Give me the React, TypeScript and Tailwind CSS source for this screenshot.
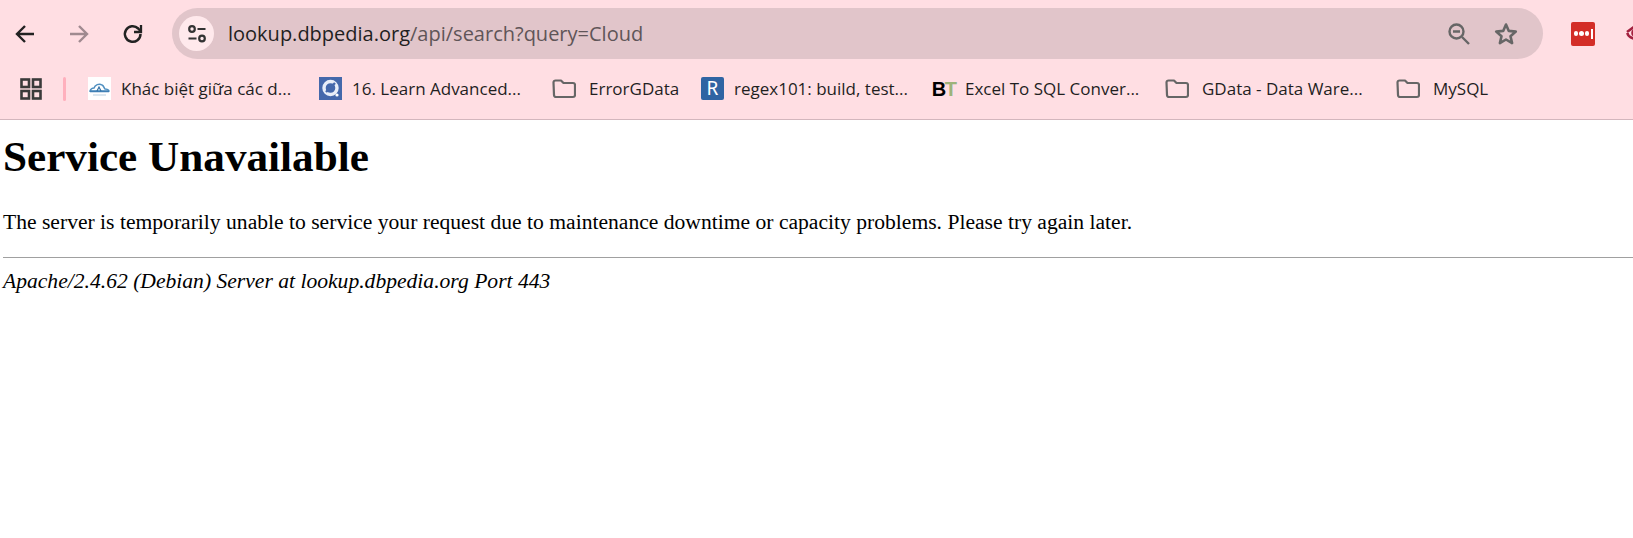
const bookmarks = [
  { id: 'a', label: 'Khác biệt giữa các d...', icon: 'cloud', width: 'w-[231px]' },
  { id: 'b', label: '16. Learn Advanced...', icon: 'ring', width: 'w-[233px]' },
  { id: 'c', label: 'ErrorGData', icon: 'folder', width: 'w-[149px]' },
  { id: 'd', label: 'regex101: build, test...', icon: 'regex', width: 'w-[231px]' },
  { id: 'e', label: 'Excel To SQL Conver...', icon: 'bt', width: 'w-[233px]' },
  { id: 'f', label: 'GData - Data Ware...', icon: 'folder', width: 'w-[231px]' },
  { id: 'g', label: 'MySQL', icon: 'folder', width: 'w-[100px]' },
];

function FolderIcon() {
  return (
    <svg className="mr-[3px] h-[23px] w-[24px] shrink-0" viewBox="0 0 24 23" fill="none" stroke="#666" strokeWidth="2.2">
      <path d="M1.5 5.5a2 2 0 0 1 2-2h5.5l2.5 2.5h9.5a2 2 0 0 1 2 2v10a2 2 0 0 1-2 2h-17a2 2 0 0 1-2-2z" strokeLinejoin="round" />
    </svg>
  );
}

function Favicon({ icon }: { icon: string }) {
  if (icon === 'folder') return <FolderIcon />;
  if (icon === 'regex') {
    return (
      <div className="flex h-[23px] w-[23px] shrink-0 items-center justify-center rounded-[2px] bg-[#2f64a3] font-['Noto_Sans',sans-serif] text-[19px] text-white">
        R
      </div>
    );
  }
  if (icon === 'bt') {
    return (
      <div className="flex h-[23px] w-[23px] shrink-0 items-center justify-center font-['Liberation_Sans',sans-serif] text-[20px] font-bold tracking-[-1.5px] text-black">
        B<span className="text-[#9db37a]">T</span>
      </div>
    );
  }
  if (icon === 'ring') {
    return (
      <svg className="h-[23px] w-[23px] shrink-0" viewBox="0 0 23 23">
        <rect width="23" height="23" fill="#4468ab" />
        <circle cx="11.5" cy="11" r="6.5" fill="none" stroke="#e8eef8" strokeWidth="3.4" />
        <path d="M7 15L16 6" stroke="#4468ab" strokeWidth="2.4" />
        <circle cx="18" cy="18" r="1.6" fill="#fff" />
      </svg>
    );
  }
  return (
    <svg className="h-[23px] w-[23px] shrink-0" viewBox="0 0 23 23">
      <rect width="23" height="23" fill="#fff" />
      <path d="M2 14c1-3 3-3 4-3 1-3 5-5 8-3 2 1 2 3 3 4 2 0 4 1 4 2z" fill="none" stroke="#4f8fc0" strokeWidth="1.5" />
      <path d="M2 14.5h19" stroke="#3f7fb5" strokeWidth="1.5" />
      <path d="M9 14l2-4 2 4" fill="none" stroke="#2f6fa5" strokeWidth="1.2" />
      <path d="M5 18h13" stroke="#b8cfe0" strokeWidth="1" />
    </svg>
  );
}

export default function App() {
  return (
    <div className="h-[538px] w-full overflow-hidden bg-white">
      {/* browser chrome */}
      <div className="border-b border-[#d3b6bd] bg-[#ffdee3]">
        <div className="flex h-[60px] items-start overflow-hidden pt-2">
          <div className="flex h-[51px] w-[172px] shrink-0 items-center pl-[14px]">
            <svg className="h-[22px] w-[22px]" viewBox="0 0 22 22" fill="none" stroke="#222" strokeWidth="2.4">
              <path d="M20 11H3.5M11 3L3 11l8 8" />
            </svg>
            <svg className="ml-[32px] h-[22px] w-[22px]" viewBox="0 0 22 22" fill="none" stroke="#a08a90" strokeWidth="2.4">
              <path d="M2 11h16.5M11 3l8 8-8 8" />
            </svg>
            <svg className="ml-[32px] h-[22px] w-[22px]" viewBox="0 0 22 22" fill="none" stroke="#222" strokeWidth="2.5">
              <path d="M18.5 11a7.8 7.8 0 1 1-2.3-5.5L18.5 8" />
              <path d="M19 2v7h-7" strokeWidth="2.3" />
            </svg>
          </div>
          <div className="flex h-[51px] w-[1371px] shrink-0 items-center rounded-full bg-[#e1c5ca] pl-[7px] pr-[25px]">
            <div className="flex h-[35px] w-[35px] shrink-0 items-center justify-center rounded-full bg-[#ffe9ec]">
              <svg className="h-[22px] w-[22px]" viewBox="0 0 22 22" fill="none" stroke="#333" strokeWidth="2.2">
                <circle cx="6" cy="6" r="2.8" />
                <path d="M11.5 6h8M2.5 15.5h8" />
                <circle cx="16" cy="15.5" r="2.8" />
              </svg>
            </div>
            <div className="ml-[14px] flex-1 font-['Open_Sans',sans-serif] text-[20px] text-[#1f1f1f]">
              lookup.dbpedia.org<span className="text-[#5f5558]">/api/search?query=Cloud</span>
            </div>
            <svg className="h-[24px] w-[24px] shrink-0" viewBox="0 0 24 24" fill="none" stroke="#666" strokeWidth="2.4">
              <circle cx="9.5" cy="9.5" r="7" />
              <path d="M6 9.5h7M15 15l7 7" />
            </svg>
            <svg className="ml-[23px] h-[24px] w-[24px] shrink-0" viewBox="0 0 24 24" fill="none" stroke="#666" strokeWidth="2.6">
              <path d="M12 2.5l2.8 6.4 7 .7-5.3 4.6 1.6 6.9-6.1-3.6-6.1 3.6 1.6-6.9-5.3-4.6 7-.7z" strokeLinejoin="round" />
            </svg>
          </div>
          <div className="flex h-[51px] min-w-0 flex-1 items-center pl-[28px]">
            <div className="flex h-[24px] w-[24px] shrink-0 items-center justify-center gap-[1px] rounded-[2px] bg-[#d32d27]">
              <span className="h-[4.5px] w-[4.5px] rounded-full bg-white" />
              <span className="h-[4.5px] w-[4.5px] rounded-full bg-white" />
              <span className="h-[4.5px] w-[4.5px] rounded-full bg-white" />
              <span className="ml-[1px] h-[10px] w-[1.5px] bg-white" />
            </div>
            <svg className="ml-[31px] h-[22px] w-[22px] shrink-0" viewBox="0 0 22 22" fill="none" stroke="#a3213f" strokeWidth="2.6">
              <path d="M1 9l8-6M1.5 10c0 3 4 5 7 6" />
              <circle cx="9" cy="10" r="2.5" />
            </svg>
          </div>
        </div>
        <div className="flex h-[59px] items-start pt-[17px]">
          <div className="flex w-[88px] shrink-0 items-center pl-[20px]">
            <svg className="h-[23px] w-[23px]" viewBox="0 0 23 23" fill="none" stroke="#3a3a3a" strokeWidth="2.6">
              <rect x="1.5" y="1.5" width="7.5" height="7.5" />
              <rect x="13" y="1.5" width="7.5" height="7.5" />
              <rect x="1.5" y="13" width="7.5" height="7.5" />
              <rect x="13" y="13" width="7.5" height="7.5" />
            </svg>
            <div className="ml-[20px] h-[24px] w-[3px] rounded-full bg-[#ffb0bd]" />
          </div>
          {bookmarks.map((b) => (
            <div key={b.id} className={`flex h-[23px] shrink-0 items-center gap-[10px] ${b.width}`}>
              <Favicon icon={b.icon} />
              <span className="whitespace-nowrap font-['Open_Sans',sans-serif] text-[17px] text-[#1f1f1f]">{b.label}</span>
            </div>
          ))}
        </div>
      </div>

      {/* error page */}
      <div className="pl-[3px] font-['Liberation_Serif',serif] text-black">
        <h1 className="mt-[13px] text-[43.2px] font-bold leading-[48px]">Service Unavailable</h1>
        <p className="mt-[29px] text-[21.6px] leading-[24px]">
          The server is temporarily unable to service your request due to maintenance downtime or capacity problems. Please try again later.
        </p>
        <hr className="mt-[23px] border-t border-[#a0a0a0]" />
        <address className="mt-[11px] text-[21.6px] italic leading-[24px]">
          Apache/2.4.62 (Debian) Server at lookup.dbpedia.org Port 443
        </address>
      </div>
    </div>
  );
}
